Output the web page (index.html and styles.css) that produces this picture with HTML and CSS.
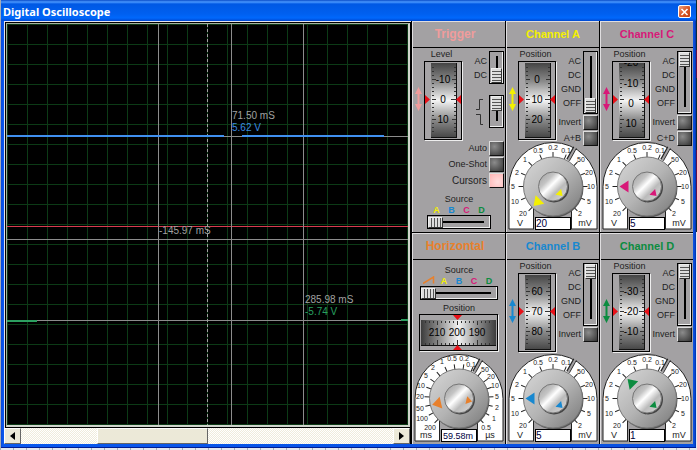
FILE: index.html
```html
<!DOCTYPE html>
<html lang="en">
<head>
<meta charset="utf-8">
<title>Digital Oscilloscope</title>
<link rel="stylesheet" href="styles.css">
</head>

<body>

<!-- shared drawings -->
<svg class="defs" width="0" height="0" aria-hidden="true">
  <defs>
    <linearGradient id="roll" x1="0" y1="0" x2="0" y2="1">
      <stop offset="0" stop-color="#444"/>
      <stop offset=".25" stop-color="#8c8c8c"/>
      <stop offset=".5" stop-color="#f4f4f4"/>
      <stop offset=".75" stop-color="#8c8c8c"/>
      <stop offset="1" stop-color="#444"/>
    </linearGradient>
    <linearGradient id="roll-h" x1="0" y1="0" x2="1" y2="0">
      <stop offset="0" stop-color="#3c3c3c"/>
      <stop offset=".25" stop-color="#909090"/>
      <stop offset=".5" stop-color="#f4f4f4"/>
      <stop offset=".75" stop-color="#909090"/>
      <stop offset="1" stop-color="#3c3c3c"/>
    </linearGradient>
    <linearGradient id="knob" x1="0" y1="0" x2="1" y2="1">
      <stop offset="0" stop-color="#d8d8d8"/>
      <stop offset=".5" stop-color="#b4b4b4"/>
      <stop offset="1" stop-color="#777"/>
    </linearGradient>
    <linearGradient id="cap" x1="0" y1="0" x2="1" y2="1">
      <stop offset="0" stop-color="#999"/>
      <stop offset=".3" stop-color="#c4c4c4"/>
      <stop offset=".45" stop-color="#fff"/>
      <stop offset=".65" stop-color="#bbb"/>
      <stop offset="1" stop-color="#ddd"/>
    </linearGradient>

    <symbol id="wheel" viewBox="0 0 50 80">
      <path d="M5.500 26l-3.500 7h2.500v10h-2.500l3.500 7l3.500-7h-2.500v-10h2.500z" fill="currentColor"/>
      <rect x="12.500" y="1.500" width="37" height="78" fill="none" stroke="#eee"/>
      <rect x="11.500" y=".5" width="37" height="78" fill="#a6a4a6" stroke="#000"/>
      <rect x="18" y="2" width="25" height="75" fill="url(#roll)"/>
      <path d="M43.500 2v75M18 76.500h26" stroke="#111"/>
      <path d="M19 6.500h2M19 10.500h2M19 14.500h2M19 18.500h4M19 22.500h2M19 26.500h2M19 30.500h2M19 34.500h2M19 38.500h4M19 42.500h2M19 46.500h2M19 50.500h2M19 54.500h2M19 58.500h4M19 62.500h2M19 66.500h2M19 70.500h2M41 6.500h2M41 10.500h2M41 14.500h2M39 18.500h4M41 22.500h2M41 26.500h2M41 30.500h2M41 34.500h2M38 38.500h5M41 42.500h2M41 46.500h2M41 50.500h2M41 54.500h2M39 58.500h4M41 62.500h2M41 66.500h2M41 70.500h2" stroke="#333"/>
      <path d="M12 34v9l5-4.500zM48 34v9l-5-4.500z" fill="#e81018"/>
    </symbol>

    <symbol id="plate" viewBox="0 0 90 88">
      <path d="M1 87V44.500a44 44 0 0 1 88 0V87H63V66H26V87z" fill="#fff" stroke="#222"/>
      <path d="M26 88V60h37v28z" fill="#a3a1a3"/>
      <path d="M25.500 87V66M63.500 87V66" stroke="#222"/>
      <path d="M67 5.500L60 18" stroke="#222" stroke-width="4"/>
      <path d="M67.500 5L60 18.500" stroke="#a3a1a3" stroke-width="2"/>
    </symbol>

    <symbol id="knobs" viewBox="0 0 90 88">
      <circle cx="46" cy="46" r="29.500" fill="#555"/>
      <circle cx="45" cy="44.500" r="29.500" fill="url(#knob)" stroke="#777"/>
      <circle cx="46" cy="45.500" r="15" fill="#444"/>
      <circle cx="45" cy="44.500" r="14.500" fill="url(#cap)" stroke="#777"/>
    </symbol>

    <symbol id="volt-scale" viewBox="0 0 90 88">
      <g stroke="#222">
        <path id="tick" d="M45 10v6"/>
        <use href="#tick" transform="rotate(-135 45 44.500)"/>
        <use href="#tick" transform="rotate(-112.500 45 44.500)"/>
        <use href="#tick" transform="rotate(-90 45 44.500)"/>
        <use href="#tick" transform="rotate(-67.500 45 44.500)"/>
        <use href="#tick" transform="rotate(-45 45 44.500)"/>
        <use href="#tick" transform="rotate(-22.500 45 44.500)"/>
        <use href="#tick" transform="rotate(22.500 45 44.500)"/>
        <use href="#tick" transform="rotate(45 45 44.500)"/>
        <use href="#tick" transform="rotate(67.500 45 44.500)"/>
        <use href="#tick" transform="rotate(90 45 44.500)"/>
        <use href="#tick" transform="rotate(112.500 45 44.500)"/>
        <use href="#tick" transform="rotate(135 45 44.500)"/>
      </g>
      <g class="scale">
        <text x="15" y="74">20</text>
        <text x="7" y="62">10</text>
        <text x="5" y="47">5</text>
        <text x="9" y="33">2</text>
        <text x="17" y="20">1</text>
        <text x="30" y="11">0.5</text>
        <text x="45" y="8">0.2</text>
        <text x="58" y="11">0.1</text>
        <text x="73" y="20">50</text>
        <text x="81" y="33">20</text>
        <text x="83" y="47">10</text>
        <text x="81" y="62">5</text>
        <text x="72" y="74">2</text>
      </g>
      <g class="unit">
        <text x="12" y="84">V</text>
        <text x="77" y="84">mV</text>
      </g>
    </symbol>

    <symbol id="time-scale" viewBox="0 0 90 88">
      <g stroke="#222">
        <use href="#tick" transform="rotate(-135 45 44.500)"/>
        <use href="#tick" transform="rotate(-119 45 44.500)"/>
        <use href="#tick" transform="rotate(-103 45 44.500)"/>
        <use href="#tick" transform="rotate(-87 45 44.500)"/>
        <use href="#tick" transform="rotate(-71 45 44.500)"/>
        <use href="#tick" transform="rotate(-56 45 44.500)"/>
        <use href="#tick" transform="rotate(-40 45 44.500)"/>
        <use href="#tick" transform="rotate(-24 45 44.500)"/>
        <use href="#tick" transform="rotate(-8 45 44.500)"/>
        <use href="#tick" transform="rotate(8 45 44.500)"/>
        <use href="#tick" transform="rotate(24 45 44.500)"/>
        <use href="#tick" transform="rotate(40 45 44.500)"/>
        <use href="#tick" transform="rotate(56 45 44.500)"/>
        <use href="#tick" transform="rotate(71 45 44.500)"/>
        <use href="#tick" transform="rotate(87 45 44.500)"/>
        <use href="#tick" transform="rotate(103 45 44.500)"/>
        <use href="#tick" transform="rotate(119 45 44.500)"/>
        <use href="#tick" transform="rotate(135 45 44.500)"/>
      </g>
      <g class="scale">
        <text x="16" y="76">200</text>
        <text x="8" y="67">100</text>
        <text x="6" y="57">50</text>
        <text x="6" y="45">20</text>
        <text x="7" y="34">10</text>
        <text x="12" y="24">5</text>
        <text x="19" y="16">2</text>
        <text x="28" y="10">1</text>
        <text x="38" y="7">0.5</text>
        <text x="50" y="7">0.2</text>
        <text x="57" y="13">0.1</text>
        <text x="71" y="18">50</text>
        <text x="77" y="25">20</text>
        <text x="81" y="34">10</text>
        <text x="83" y="45">5</text>
        <text x="83" y="56">2</text>
        <text x="80" y="67">1</text>
        <text x="72" y="76">0.5</text>
      </g>
      <g class="unit">
        <text x="12" y="84">ms</text>
        <text x="76" y="84">µs</text>
      </g>
    </symbol>

    <path id="pointer" d="M45 17l-6 9h12z" fill="currentColor"/>
    <path id="pointer-small" d="M45 31l-4 6h8z" fill="currentColor"/>
  </defs>
</svg>

<main class="window">
  <header class="titlebar">
    <h1>Digital Oscilloscope</h1>
    <button class="close" type="button" aria-label="Close">
      <svg width="9" height="8" viewBox="0 0 9 8"><path d="M1.500 1l6 6M7.500 1l-6 6" stroke="#fff" stroke-width="1.600"/></svg>
    </button>
  </header>

  <div class="content">
    <section class="scope">
      <div class="frame">
        <svg class="plot" viewBox="0 0 401 401" preserveAspectRatio="none">
          <defs>
            <pattern id="grid" width="20" height="20" patternUnits="userSpaceOnUse">
              <path d="M.5 0v20M0 .5h20" stroke="#0c3a16"/>
            </pattern>
          </defs>
          <rect width="401" height="401" fill="url(#grid)"/>
          <path d="M0 202.500h401" stroke="#d83c50"/>
          <path d="M0 112.500h401M0 215.500h401M0 296.500h401" stroke="#8c8c8c"/>
          <path d="M151.500 0v401M224.500 0v401M296.500 0v401" stroke="#8c8c8c"/>
          <path d="M200.500 0v401" stroke="#a0a0a0" stroke-dasharray="3 2"/>
          <path d="M0 112h217M235 112h142" stroke="#4090f0" stroke-width="2"/>
          <path d="M0 297h30M394 296h7" stroke="#2ca060" stroke-width="2"/>
          <g class="readings">
            <text x="225" y="95">71.50 mS</text>
            <text x="225" y="107" class="reading-b">5.62 V</text>
            <text x="152" y="210">-145.97 mS</text>
            <text x="298" y="279">285.98 mS</text>
            <text x="298" y="291" class="reading-d">-5.74 V</text>
          </g>
        </svg>
      </div>
      <div class="scrollbar">
        <button type="button" aria-label="Scroll left"><svg width="5" height="8" viewBox="0 0 5 8"><path d="M5 0v8L0 4z"/></svg></button>
        <input type="range" min="0" max="100" value="29" aria-label="Scroll">
        <button type="button" aria-label="Scroll right"><svg width="5" height="8" viewBox="0 0 5 8"><path d="M0 0v8l5-4z"/></svg></button>
      </div>
    </section>

    <div class="controls">

      <section class="panel trigger">
        <h2>Trigger</h2>
        <div class="upper">
          <div class="position">
            <span>Level</span>
            <svg class="wheel" viewBox="0 0 50 80">
              <use href="#wheel"/>
              <text x="30" y="22">-10</text>
              <text x="30" y="42">0</text>
              <text x="30" y="62">10</text>
            </svg>
          </div>
          <div class="modes">
            <div class="mode">
              <label for="trigger-mode">AC<br>DC</label>
              <input class="switch short" id="trigger-mode" type="range" min="0" max="1" value="1">
            </div>
            <div class="mode edge">
              <label for="trigger-edge" aria-label="Edge"><svg width="8" height="28" viewBox="0 0 8 28"><path d="M0 11.500h3.500v-10H7M0 16.500h4.500v10H7" fill="none" stroke="#333"/></svg></label>
              <input class="switch short" id="trigger-edge" type="range" min="0" max="1" value="0">
            </div>
          </div>
        </div>
        <div class="options">
          <div class="option"><label for="auto">Auto</label><input id="auto" type="checkbox"></div>
          <div class="option"><label for="one-shot">One-Shot</label><input id="one-shot" type="checkbox"></div>
          <div class="option large"><label for="cursors">Cursors</label><input id="cursors" type="checkbox" checked></div>
        </div>
        <div class="source">
          <label for="trigger-source">Source</label>
          <div class="letters"><b class="a">A</b><b class="b">B</b><b class="c">C</b><b class="d">D</b></div>
          <input class="slider" id="trigger-source" type="range" min="0" max="3" value="0">
        </div>
      </section>

      <section class="panel a">
        <h2>Channel A</h2>
        <div class="upper">
          <div class="position">
            <span>Position</span>
            <svg class="wheel" viewBox="0 0 50 80">
              <use href="#wheel"/>
              <text x="30" y="22">0</text>
              <text x="30" y="42">10</text>
              <text x="30" y="62">20</text>
            </svg>
          </div>
          <div class="modes">
            <div class="mode">
              <label for="mode-a">AC<br>DC<br>GND<br>OFF</label>
              <input class="switch" id="mode-a" type="range" min="0" max="3" value="3">
            </div>
            <div class="option"><label for="invert-a">Invert</label><input id="invert-a" type="checkbox"></div>
            <div class="option"><label for="sum-ab">A+B</label><input id="sum-ab" type="checkbox"></div>
          </div>
        </div>
        <div class="dial">
          <svg viewBox="0 0 90 88">
            <use href="#plate"/>
            <use href="#volt-scale"/>
            <use href="#knobs"/>
            <use href="#pointer" transform="rotate(-135 45 44.500)"/>
            <use href="#pointer-small" transform="rotate(135 45 44.500)"/>
          </svg>
          <input type="text" value="20" aria-label="Channel A scale">
        </div>
      </section>

      <section class="panel c">
        <h2>Channel C</h2>
        <div class="upper">
          <div class="position">
            <span>Position</span>
            <svg class="wheel" viewBox="0 0 50 80">
              <use href="#wheel"/>
              <svg x="18" y="2" width="25" height="8"><text x="12" y="3">-20</text></svg>
              <text x="30" y="26">-10</text>
              <text x="30" y="46">0</text>
              <text x="30" y="66">10</text>
            </svg>
          </div>
          <div class="modes">
            <div class="mode">
              <label for="mode-c">AC<br>DC<br>GND<br>OFF</label>
              <input class="switch" id="mode-c" type="range" min="0" max="3" value="0">
            </div>
            <div class="option"><label for="invert-c">Invert</label><input id="invert-c" type="checkbox"></div>
            <div class="option"><label for="sum-cd">C+D</label><input id="sum-cd" type="checkbox"></div>
          </div>
        </div>
        <div class="dial">
          <svg viewBox="0 0 90 88">
            <use href="#plate"/>
            <use href="#volt-scale"/>
            <use href="#knobs"/>
            <use href="#pointer" transform="rotate(-90 45 44.500)"/>
            <use href="#pointer-small" transform="rotate(135 45 44.500)"/>
          </svg>
          <input type="text" value="5" aria-label="Channel C scale">
        </div>
      </section>

      <section class="panel horizontal">
        <h2>Horizontal</h2>
        <div class="source wide">
          <label for="time-source">Source</label>
          <div class="letters"><svg width="13" height="8" viewBox="0 0 13 8"><path d="M0 7.500L10.500 1v6.500" fill="none" stroke="currentColor" stroke-width="1.500"/></svg><b class="a">A</b><b class="b">B</b><b class="c">C</b><b class="d">D</b></div>
          <input class="slider" id="time-source" type="range" min="0" max="4" value="0">
        </div>
        <div class="timebase">
          <span>Position</span>
          <svg class="wheel-h" viewBox="0 0 80 38">
            <rect x="1.500" y="1.500" width="78" height="36" fill="none" stroke="#eee"/>
            <rect x=".5" y=".5" width="78" height="36" fill="#a6a4a6" stroke="#000"/>
            <rect x="2" y="6" width="75" height="25" fill="url(#roll-h)"/>
            <path d="M2 31.500h75" stroke="#111"/>
            <path d="M6.500 7v2M10.500 7v2M14.500 7v2M18.500 7v4M22.500 7v2M26.500 7v2M30.500 7v2M34.500 7v2M38.500 7v4M42.500 7v2M46.500 7v2M50.500 7v2M54.500 7v2M58.500 7v4M62.500 7v2M66.500 7v2M70.500 7v2M6.500 29v2M10.500 29v2M14.500 29v2M18.500 26v5M22.500 29v2M26.500 29v2M30.500 29v2M34.500 29v2M38.500 26v5M42.500 29v2M46.500 29v2M50.500 29v2M54.500 29v2M58.500 26v5M62.500 29v2M66.500 29v2M70.500 29v2" stroke="#333"/>
            <path d="M34 1h9l-4.500 5zM34 36h9l-4.500-5z" fill="#e81018"/>
            <text x="18" y="22">210</text>
            <text x="38" y="22">200</text>
            <text x="58" y="22">190</text>
          </svg>
        </div>
        <div class="dial">
          <svg viewBox="0 0 90 88">
            <use href="#plate"/>
            <use href="#time-scale"/>
            <use href="#knobs"/>
            <use href="#pointer" transform="rotate(-103 45 44.500)"/>
            <use href="#pointer-small" transform="rotate(103 45 44.500)"/>
          </svg>
          <input type="text" value="59.58m" aria-label="Time scale">
        </div>
      </section>

      <section class="panel b">
        <h2>Channel B</h2>
        <div class="upper">
          <div class="position">
            <span>Position</span>
            <svg class="wheel" viewBox="0 0 50 80">
              <use href="#wheel"/>
              <text x="30" y="22">60</text>
              <text x="30" y="42">70</text>
              <text x="30" y="62">80</text>
            </svg>
          </div>
          <div class="modes">
            <div class="mode">
              <label for="mode-b">AC<br>DC<br>GND<br>OFF</label>
              <input class="switch" id="mode-b" type="range" min="0" max="3" value="0">
            </div>
            <div class="option"><label for="invert-b">Invert</label><input id="invert-b" type="checkbox"></div>
          </div>
        </div>
        <div class="dial">
          <svg viewBox="0 0 90 88">
            <use href="#plate"/>
            <use href="#volt-scale"/>
            <use href="#knobs"/>
            <use href="#pointer" transform="rotate(-90 45 44.500)"/>
            <use href="#pointer-small" transform="rotate(135 45 44.500)"/>
          </svg>
          <input type="text" value="5" aria-label="Channel B scale">
        </div>
      </section>

      <section class="panel d">
        <h2>Channel D</h2>
        <div class="upper">
          <div class="position">
            <span>Position</span>
            <svg class="wheel" viewBox="0 0 50 80">
              <use href="#wheel"/>
              <text x="30" y="22">-30</text>
              <text x="30" y="42">-20</text>
              <text x="30" y="62">-10</text>
            </svg>
          </div>
          <div class="modes">
            <div class="mode">
              <label for="mode-d">AC<br>DC<br>GND<br>OFF</label>
              <input class="switch" id="mode-d" type="range" min="0" max="3" value="0">
            </div>
            <div class="option"><label for="invert-d">Invert</label><input id="invert-d" type="checkbox"></div>
          </div>
        </div>
        <div class="dial">
          <svg viewBox="0 0 90 88">
            <use href="#plate"/>
            <use href="#volt-scale"/>
            <use href="#knobs"/>
            <use href="#pointer" transform="rotate(-45 45 44.500)"/>
            <use href="#pointer-small" transform="rotate(135 45 44.500)"/>
          </svg>
          <input type="text" value="1" aria-label="Channel D scale">
        </div>
      </section>

    </div>
  </div>
</main>

</body>
</html>
```

FILE: styles.css
```css
* {
  box-sizing: border-box;
}

body {
  margin: 0;
  padding: 0 1px;
  background:
    linear-gradient(#0c2c38 0 50px, #601048 50px 78px, #0c2c38 78px 150px, #601048 150px 200px, #0c2c38 200px) 100% 0 / 1px 232px no-repeat,
    repeating-linear-gradient(90deg, #a4acb8 0 1px, #e4e8f0 1px 13px);
  font-family: "Liberation Sans", Arial, sans-serif;
  font-size: 9px;
  color: #222;
}

.defs {
  display: block;
}

svg {
  display: block;
}

input, button {
  appearance: none;
  margin: 0;
  padding: 0;
  font: inherit;
}

.window {
  padding: 0 3px 3px;
  background: linear-gradient(90deg, #0848d8, #0a58ee 2px, #0a50e0 calc(100% - 2px), #0030a8);
  border-bottom: 1px solid #001c90;
}

/* title bar */
.titlebar {
  display: flex;
  align-items: center;
  justify-content: space-between;
  height: 21px;
  margin: 0 -3px;
  padding: 2px 5px 0 2px;
  background: linear-gradient(#0a4cc8, #4a98ff 2px, #0058e4 4px, #0060f0 14px, #0068fc 18px, #0048d0);
}

.titlebar h1 {
  margin: 0;
  font: bold 11px/18px "Noto Sans", "Open Sans", sans-serif;
  color: #fff;
}

.close {
  display: flex;
  align-items: center;
  justify-content: center;
  width: 13px;
  height: 13px;
  border: 1px solid #fff;
  border-radius: 2px;
  background: linear-gradient(135deg, #f0a080, #d85828 50%, #c04010);
}

.content {
  display: flex;
}

/* screen */
.scope {
  flex: 1;
  display: flex;
  flex-direction: column;
}

.frame {
  flex: 1;
  display: flex;
  padding: 1px;
  border: solid #e4e4ec;
  border-width: 1px 0 0 1px;
  background: #000;
}

.plot {
  flex: 1;
  width: 100%;
  height: 404px;
  border: 1px solid;
  border-width: 1px 2px 2px 1px;
  border-color: #a4b0a0 #d0d4cc #d0d4cc #a4b0a0;
}

.readings {
  font-size: 10px;
  fill: #a0a0a0;
}

.reading-b {
  fill: #3c8ce0;
}

.reading-d {
  fill: #28a060;
}

.scrollbar {
  display: flex;
  height: 16px;
  background: #f8f6ea;
  border-right: 1px solid #000;
}

.scrollbar button {
  display: flex;
  align-items: center;
  justify-content: center;
  width: 17px;
  border: 1px solid;
  border-color: #fff #666 #666 #fff;
  background: #ece9d8;
}

.scrollbar input {
  flex: 1;
  min-width: 0;
  background: repeating-conic-gradient(#fff 0 25%, #f0ecdc 0 50%) 0 0 / 2px 2px;
}

.scrollbar input::-webkit-slider-thumb {
  appearance: none;
  width: 111px;
  height: 16px;
  border: 1px solid;
  border-color: #fff #666 #666 #fff;
  background: #ece9d8;
}

/* control panels */
.controls {
  display: grid;
  grid-template-columns: repeat(3, 93px);
  gap: 1px;
  padding-left: 1px;
  background: #000;
}

.panel {
  border-left: 1px solid #e0dee0;
  border-top: 1px solid #e0dee0;
  background: #a3a1a3;
}

.panel h2 {
  margin: 0;
  border-bottom: 1px solid #000;
  font-size: 11px;
  line-height: 25px;
  text-align: center;
}

.trigger h2, .horizontal h2 {
  padding-right: 8px;
  font-size: 12px;
}

.trigger {
  color: #f09c9c;
}

.horizontal {
  color: #e8802c;
}

.a {
  color: #f4f000;
}

.b {
  color: #1888d0;
}

.c {
  color: #d81878;
}

.d {
  color: #0c8c40;
}

label, .position span, .timebase span {
  color: #222;
}

.upper {
  display: flex;
  justify-content: space-between;
  height: 98px;
  padding-right: 1px;
}

.trigger .upper {
  height: 93px;
}

.position {
  width: 50px;
}

.position span {
  display: block;
  padding-left: 7px;
  line-height: 13px;
  text-align: center;
}

.wheel {
  width: 50px;
  height: 80px;
}

.wheel text, .wheel-h text {
  font-size: 10px;
  fill: #000;
  text-anchor: middle;
}

.modes {
  display: flex;
  flex-direction: column;
  gap: 1px;
  padding-top: 3px;
}

.mode, .option {
  display: flex;
  justify-content: flex-end;
  gap: 2px;
}

.mode label {
  padding-top: 3px;
  line-height: 14px;
  text-align: right;
}

.edge {
  padding-top: 10px;
}

.edge label {
  padding-right: 3px;
}

.option {
  line-height: 15px;
}

.option.large {
  font-size: 10px;
}

.options {
  display: flex;
  flex-direction: column;
  gap: 1px;
  padding-right: 1px;
}

input[type="checkbox"] {
  width: 15px;
  height: 15px;
  border: 1px solid;
  border-color: #ddd #111 #111 #ddd;
  background: radial-gradient(circle at 35% 35%, #8c8c8c, #333);
}

input[type="checkbox"]:checked {
  background: radial-gradient(circle at 60% 60%, #ffdede, #ffb4b4);
}

/* AC / DC / GND / OFF switch */
.switch {
  writing-mode: vertical-lr;
  width: 15px;
  height: 63px;
  border: 1px solid #000;
  box-shadow: inset -1px -1px #eee;
  background: linear-gradient(#000, #000) 6px 4px / 2px calc(100% - 10px) no-repeat;
}

.switch.short {
  height: 33px;
}

.switch::-webkit-slider-thumb {
  appearance: none;
  width: 11px;
  height: 15px;
  border: 1px solid;
  border-color: #eee #333 #333 #eee;
  background: repeating-linear-gradient(#ddd 0 2px, #555 2px 3px);
}

/* trigger source */
.source {
  display: flex;
  flex-direction: column;
  align-items: center;
  padding: 5px 0 0;
}

.source label {
  line-height: 12px;
}

.letters {
  display: grid;
  grid-template-columns: repeat(4, 15px);
  justify-items: center;
  line-height: 10px;
}

.slider {
  width: 64px;
  height: 14px;
  border: 1px solid #000;
  box-shadow: inset -1px -1px #eee;
  background: linear-gradient(#000, #000) 8px 5px / calc(100% - 14px) 2px no-repeat;
}

.slider::-webkit-slider-thumb {
  appearance: none;
  width: 15px;
  height: 11px;
  border: 1px solid;
  border-color: #eee #333 #333 #eee;
  background: repeating-linear-gradient(90deg, #ddd 0 2px, #555 2px 3px);
}

.source.wide {
  padding-top: 4px;
}

.wide .letters {
  grid-template-columns: repeat(5, 15px);
}

.wide .slider {
  width: 78px;
}

.timebase {
  display: flex;
  flex-direction: column;
  align-items: center;
  padding: 2px 0;
}

.timebase span {
  line-height: 12px;
}

.wheel-h {
  width: 80px;
  height: 38px;
}

/* scale dials */
.dial {
  display: grid;
  margin-top: -4px;
  padding-left: 1px;
}

.horizontal .dial {
  margin-top: 0;
}

.dial svg, .dial input {
  grid-area: 1 / 1;
}

.dial > svg {
  width: 90px;
  height: 88px;
}

.dial input {
  align-self: end;
  width: 36px;
  height: 13px;
  margin-left: 27px;
  border: 1px solid #000;
  background: #fff;
  font-size: 10px;
  color: #000040;
}

.horizontal .dial input {
  padding-left: 1px;
  font-size: 9px;
}

.scale {
  font-size: 7px;
  fill: #222;
  text-anchor: middle;
}

.unit {
  font-size: 9px;
  fill: #222;
  text-anchor: middle;
}
```
